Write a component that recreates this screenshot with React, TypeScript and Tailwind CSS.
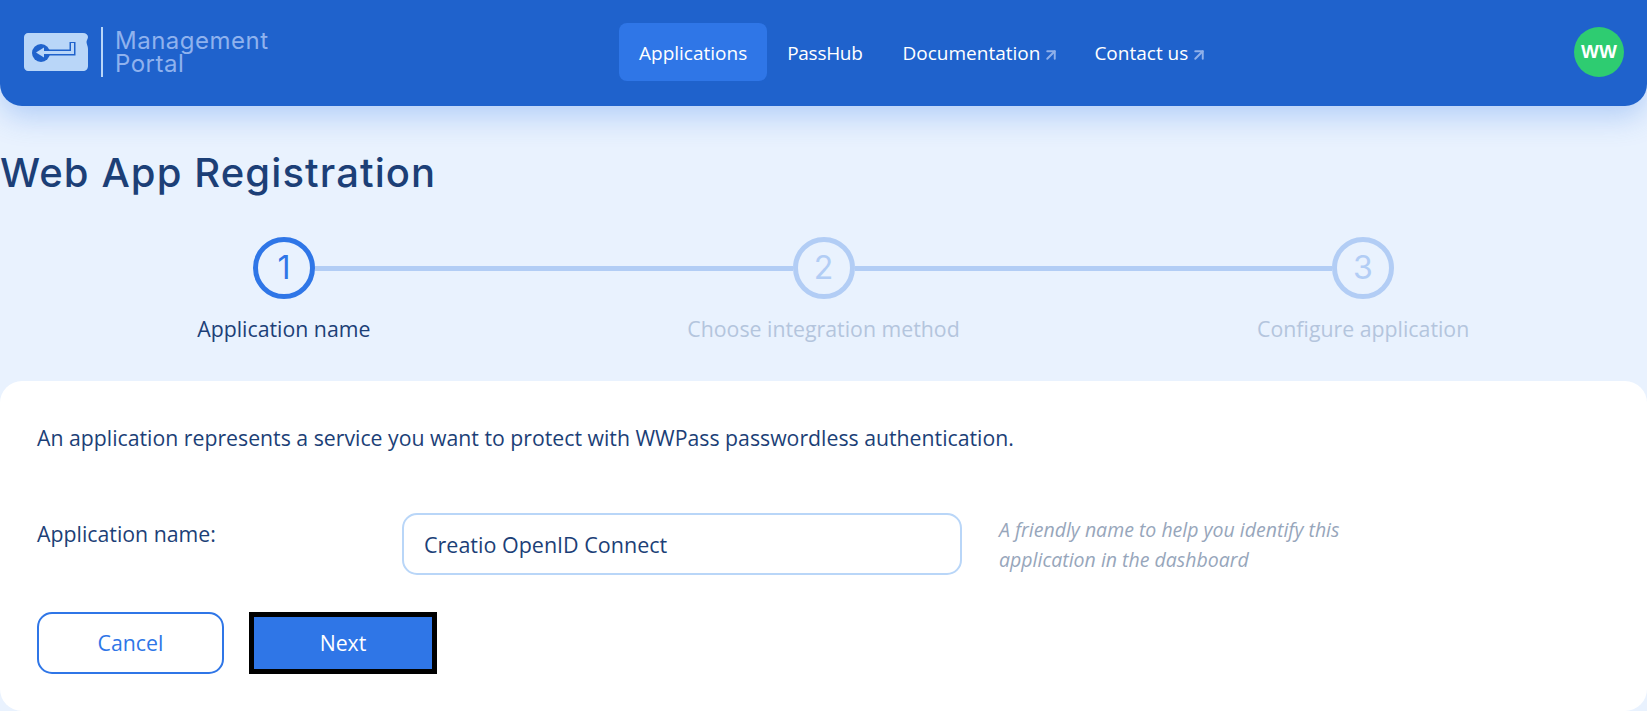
import { ArrowUpRight } from 'lucide-react';

const bodyFont = "font-['Open_Sans','Noto_Sans',sans-serif]";

function Logo() {
  return (
    <svg width="64" height="38" viewBox="0 0 64 38" fill="none">
      <path
        d="M4 0H59C62 0 64 2 64 4C64 6 62.500 7 62.500 9C62.500 11 64 13 64 16V33C64 36 62 38 59 38H4C2 38 0 36 0 34V4C0 2 2 0 4 0Z"
        fill="#b9d6f8"
      />
      <circle cx="17" cy="20" r="9" fill="#1f62cc" />
      <path d="M20 19.500H48.500V9" stroke="#1f62cc" strokeWidth="6" />
      <path d="M18 19.500H48.500V10" stroke="#b9d6f8" strokeWidth="3" />
      <path d="M12 19.500L20 14.500V24.500Z" fill="#b9d6f8" />
    </svg>
  );
}

function NavLink({ label, active, external, tight }: { label: string; active?: boolean; external?: boolean; tight?: boolean }) {
  return (
    <a
      className={`flex h-[58px] items-center rounded-lg pl-5 pt-[2px] text-[19px] text-white ${external ? 'pr-[14px]' : 'pr-5'} ${
        active ? 'bg-[#2f76e7]' : ''
      } ${tight ? 'tracking-[-0.3px]' : ''}`}
    >
      {label}
      {external && <ArrowUpRight className="ml-[2px] mt-[4px] h-[18px] w-[18px] text-[#8fb0ea]" strokeWidth={2.6} />}
    </a>
  );
}

function StepCircle({ n, active }: { n: number; active?: boolean }) {
  return (
    <div
      className={`flex h-[62px] w-[62px] shrink-0 items-center justify-center rounded-full border-[5px] font-['Inter',sans-serif] text-[32px] ${
        active ? 'border-[#2f76e7] text-[#2f76e7]' : 'border-[#b2cdf5] text-[#b2cdf5]'
      }`}
    >
      {n}
    </div>
  );
}

export default function App() {
  return (
    <div className={`flex h-[711px] flex-col overflow-hidden bg-[#e9f2fe] ${bodyFont}`}>
      <header className="relative flex h-[106px] shrink-0 items-center rounded-b-[22px] bg-[#1f62cc] pb-[2px] pl-6 pr-[23px] shadow-[0_10px_30px_rgba(47,118,231,0.3)]">
        <div className="flex w-[595px] items-center">
          <Logo />
          <div className="ml-[13px] h-[50px] w-[2px] bg-[#b9d6f8]" />
          <div className="ml-[12px] font-['Inter',sans-serif] text-[24px] leading-[23px] tracking-[0.5px] text-[#8fb2ee]">
            Management
            <br />
            Portal
          </div>
        </div>
        <nav className="flex items-center">
          <NavLink label="Applications" active />
          <NavLink label="PassHub" tight />
          <NavLink label="Documentation" external />
          <NavLink label="Contact us" external />
        </nav>
        <div className="ml-auto flex h-[50px] w-[50px] items-center justify-center rounded-full bg-[#2ecc71] font-['Liberation_Sans',sans-serif] text-[19px] font-bold text-white">
          WW
        </div>
      </header>

      <h1 className="mt-[40px] font-['Inter',sans-serif] text-[40px] font-medium leading-[54px] tracking-[1.1px] text-[#1c3f77]">
        Web App Registration
      </h1>

      <div className="mt-[37px] flex items-center px-[253px]">
        <StepCircle n={1} active />
        <div className="h-[5px] flex-1 bg-[#b2cdf5]" />
        <StepCircle n={2} />
        <div className="h-[5px] flex-1 bg-[#b2cdf5]" />
        <StepCircle n={3} />
      </div>
      <div className="mt-[16px] grid grid-cols-3 px-[14px] text-center text-[21.3px] leading-[28px]">
        <div className="text-[#1c3f77]">Application name</div>
        <div className="text-[#b4c5dd]">Choose integration method</div>
        <div className="text-[#b4c5dd]">Configure application</div>
      </div>

      <main className="mt-[38px] flex-1 rounded-[22px] bg-white pl-[37px] pt-[43px] text-[#1c3f77]">
        <p className="text-[21.25px] leading-[28px]">
          An application represents a service you want to protect with WWPass passwordless authentication.
        </p>
        <div className="mt-[61px] flex items-start">
          <label className="w-[365px] pt-[7px] text-[21.3px] leading-[28px]">Application name:</label>
          <input
            readOnly
            value="Creatio OpenID Connect"
            className="h-[62px] w-[560px] rounded-[15px] border-2 border-[#b9d6f8] px-[20px] text-[21.5px] text-[#1c3f77] outline-none"
          />
          <p className="ml-[37px] w-[370px] pt-[2px] text-[19.5px] italic leading-[30px] text-[#97a6bb]">
            A friendly name to help you identify this application in the dashboard
          </p>
        </div>
        <div className="mt-[37px] flex gap-[25px]">
          <button className="h-[62px] w-[187px] rounded-[15px] border-2 border-[#2f76e7] text-[21.3px] text-[#2f76e7]">
            Cancel
          </button>
          <button className="h-[62px] w-[188px] border-[5px] border-black bg-[#2f76e7] text-[21.3px] text-white">
            Next
          </button>
        </div>
      </main>
    </div>
  );
}
